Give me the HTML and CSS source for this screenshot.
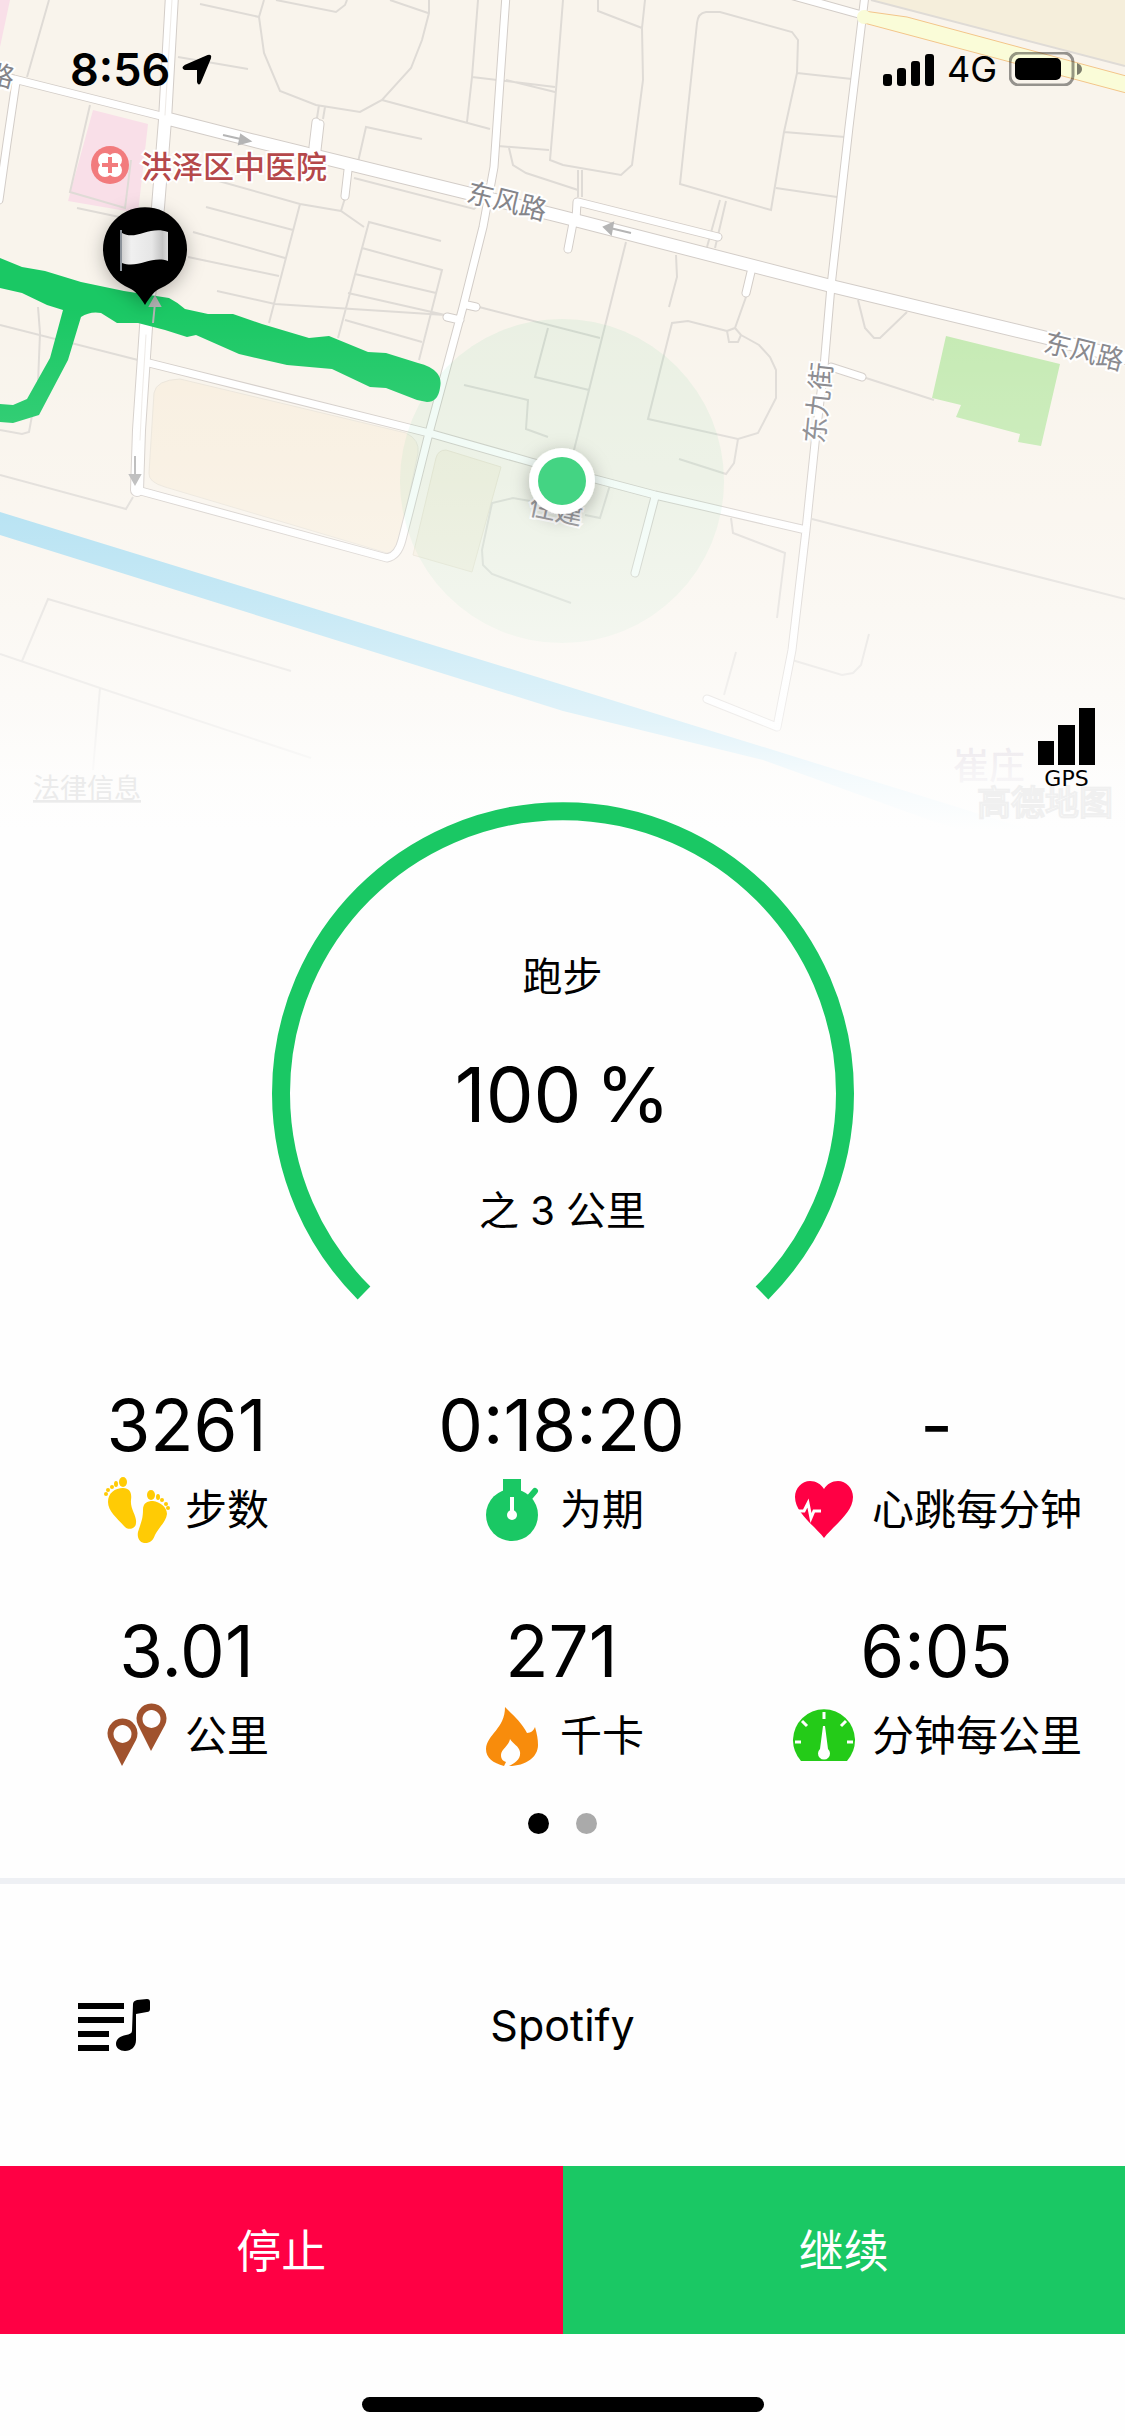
FILE: index.html
```html
<!DOCTYPE html>
<html lang="zh-CN">
<head>
    <meta charset="UTF-8">
    <meta name="viewport" content="width=device-width, initial-scale=1.0">
    <title>跑步</title>
    <link rel="stylesheet" href="styles.css">
</head>
<body>
    <header class="map">
        <svg class="map-canvas" viewBox="0 0 1125 830">
            <defs>
                <linearGradient id="fade" x1="0" y1="0" x2="0" y2="1">
                    <stop offset="0.37" stop-color="#fefefe" stop-opacity="0"/>
                    <stop offset="0.58" stop-color="#fefefe" stop-opacity="0.16"/>
                    <stop offset="0.72" stop-color="#fefefe" stop-opacity="0.36"/>
                    <stop offset="0.87" stop-color="#fefefe" stop-opacity="0.68"/>
                    <stop offset="0.93" stop-color="#fefefe" stop-opacity="0.88"/>
                    <stop offset="1" stop-color="#fefefe"/>
                </linearGradient>
                <linearGradient id="flag" x1="0" y1="0" x2="1" y2="0">
                    <stop offset="0" stop-color="#d0d0d0"/>
                    <stop offset="0.2" stop-color="#f0f0f0"/>
                    <stop offset="0.65" stop-color="#e6e6e6"/>
                    <stop offset="0.88" stop-color="#c4c4c4"/>
                    <stop offset="1" stop-color="#dcdcdc"/>
                </linearGradient>
                <filter id="shadow" x="-60%" y="-60%" width="220%" height="220%">
                    <feDropShadow dx="0" dy="4" stdDeviation="9" flood-color="#000" flood-opacity="0.28"/>
                </filter>
                <path id="wide-roads" d="M172 -5L165 120L158 207L146 327L139 430L137 490M165 118L251 140L467 193L563 217L831 286L1043 337L1130 359"/>
                <path id="roads" d="M-5 73L14 79L165 117M506 -5L494 167L483 227L463 307L429 433L413 497L402 540Q398 556 387 558L137 490M149 363L429 433L531 462L655 495L806 530M655 497L635 573M865 -5L849 127L831 286L824 367L815 443L806 530L792 650L777 727L707 699M790 -5L862 15M578 202L718 237M577 202L576 220M573 223L568 249M751 272L746 293M831 367L862 377M316 122L313 147M320 124L317 150M348 170L345 196M476 307L467 305M447 317L460 320M16 82L7 143L-1 200"/>
            </defs>
            <rect width="1125" height="830" fill="#f9f4ec"/>
            <!-- areas -->
            <path fill="#f5eedb" d="M871 0H1125V66Z"/>
            <path fill="#f9dfe8" d="M93 110L148 124L138 213L68 201ZM0 0H10L0 47Z"/>
            <path fill="#f8efe0" stroke="#ebe5da" d="M154 393Q156 380 180 379L406 433Q420 440 418 453L399 543Q396 552 387 553L165 487Q148 482 149 473Z"/>
            <path fill="#f5eedf" stroke="#eae3d2" d="M446 450L501 467L472 572L413 555L436 458Q438 450 446 450Z"/>
            <path fill="#c5eab3" d="M946 336L1060 364L1041 446L1018 442L1020 434L956 417L961 405L932 398Z"/>
            <path fill="#a6dcf0" d="M0 512L563 685L957 807L1030 830H960L921 817L763 760L563 711L0 535Z"/>
            <!-- small lanes -->
            <path class="lane" d="M49 0L27 77M200 4L259 17M264 0L259 17L264 53L280 91L316 105L360 112L382 100L411 68L422 40L429 13V0M276 0L336 12L345 5L347 0M390 0L428 13M178 57L248 69M382 100L490 129M478 0L472 77L467 122M472 77L555 87M506 80L555 92M498 146L549 150M563 0L556 90L550 160L563 165L621 175L632 165L643 80L642 28L645 0M598 0V11L642 28M509 148L513 165L526 173L578 190M422 139L366 127L358 162M354 178L474 209L481 203M319 105L317 118M325 107L323 119M90 105L70 192L125 208L131 160M77 208L124 218"/>
            <path class="lane" d="M215 180L300 204L341 211L364 227M345 198L341 211M300 204L269 323M206 207L293 230M193 232L285 258M188 257L279 276M217 291L275 304L445 315M441 241L369 222L338 338M362 248L442 270L419 360M355 274L436 293M348 293L445 315M345 320L422 342M479 307L600 338M0 325L138 360M38 307L40 333L38 383L29 432L22 434L0 430M548 328L535 377L589 390M464 385L528 400L526 429L548 437M626 242L574 450M676 255L677 277L669 307M746 297L735 328L741 335L738 342H729L727 331L735 328M727 331L688 321L672 323L648 419L738 439L758 433L776 398V370L770 357L759 345L741 335M738 439L734 463L726 474L679 459M858 300L865 328L874 338H880L907 312M866 378L934 400"/>
            <path class="lane" d="M697 23Q698 13 706 12L720 12L792 32L798 40L797 73L784 132L771 210L680 184ZM797 73L852 79M784 132L845 137M776 188L837 197M720 200L707 247M726 201L715 248M578 170V197M582 170V197M812 519L1125 599M731 518L733 533L785 553L777 618M792 660L842 675L853 673L861 665L869 634M736 652L724 695M571 603L492 574L483 565L482 550L492 503L513 498L530 501M610 485L600 518L585 515M0 475L126 509L133 497M291 671L48 599L22 661M0 654L100 688L311 758M100 688L93 770M871 0L1125 66"/>
            <!-- streets: casing first, then the white fill -->
            <g fill="none" stroke-linecap="round" stroke-linejoin="round">
                <use href="#roads" stroke="#d3cdc8" stroke-width="9"/>
                <use href="#wide-roads" stroke="#d3cdc8" stroke-width="14"/>
                <use href="#roads" stroke="#fff" stroke-width="7"/>
                <use href="#wide-roads" stroke="#fff" stroke-width="12"/>
                <path stroke="#eeeae6" d="M172 0L165 115M146 335L142 400L140 440"/>
            </g>
            <path fill="#fafcd8" stroke="#f3c58a" d="M864 11L907 17L1130 77V94L864 23Z"/>
            <circle cx="864" cy="17" r="7" fill="#fafcd8"/>
            <circle cx="562" cy="481" r="162" fill="#1ac864" fill-opacity="0.065"/>
            <!-- track -->
            <path fill="#1ac864" d="M0 258L22 267L45 271L81 282L124 291L169 298Q177 302 185 309L208 314H233L262 324L309 338L329 336L368 352L386 353L418 363Q431 366 437 373Q442 379 440 388Q438 402 427 402L417 400L386 388L370 387L332 369L287 365L239 354L196 335L187 337L165 330L138 323H117L101 313Q90 311 81 317L68 360L39 415L13 423L0 422V404L13 405L27 399L50 358L63 310L47 305L22 293L0 288Z"/>
            <g class="arrow">
                <path d="M223 135L245 140M241 135L250 141L239 144Z"/>
                <path d="M631 233L610 228M613 223L604 227L611 234Z"/>
                <path d="M153 323L155 303M150 306L155 297L160 306Z"/>
                <path d="M135 456V477M130 475H140L135 484Z"/>
            </g>
            <!-- place names -->
            <g class="street-name">
                <text transform="translate(507 201) rotate(14)" y="10">东风路</text>
                <text transform="translate(1084 351) rotate(14)" y="10">东风路</text>
                <text transform="translate(1 75) rotate(14)" y="10">路</text>
                <text transform="translate(818 403) rotate(-84)" y="10">东九街</text>
                <text transform="translate(556 510) rotate(12)" y="10">住建</text>
            </g>
            <text class="district" x="989" y="779">崔庄</text>
            <text class="hospital" x="141" y="178">洪泽区中医院</text>
            <circle cx="110" cy="165" r="19" fill="#f27b7d"/>
            <g fill="#fff">
                <circle cx="105" cy="160" r="7"/><circle cx="115" cy="160" r="7"/>
                <circle cx="105" cy="170" r="7"/><circle cx="115" cy="170" r="7"/>
            </g>
            <path stroke="#f27b7d" stroke-width="4" d="M110 157V173M102 165H118"/>
            <!-- start pin -->
            <path filter="url(#shadow)" d="M145 305C140 297 136 291 129 288A42 42 0 1 1 161 288C154 291 150 297 145 305Z"/>
            <path fill="url(#flag)" d="M122 233C136 241 150 225 168 232V261C152 255 138 269 122 263Z"/>
            <path stroke="#8b929a" stroke-width="2" d="M121 230V271"/>
            <rect width="1125" height="830" fill="url(#fade)"/>
            <a href="#legal"><text class="legal" x="33" y="798">法律信息</text></a>
            <text class="brand" x="977" y="815">高德地图</text>
            <circle cx="562" cy="481" r="33" fill="#fff" filter="url(#shadow)"/>
            <circle cx="562" cy="481" r="24" fill="#44d483"/>
        </svg>

        <div class="status-bar">
            <span class="clock">8:56
                <svg width="30" height="31" viewBox="0 0 30 31"><path stroke="#000" stroke-width="2" stroke-linejoin="round" d="M26 2Q29 1 28 4L18 28Q17 31 16 28V15H3Q0 14 3 12Z"/></svg>
            </span>
            <span class="network">
                <svg width="52" height="33" viewBox="0 0 52 33"><rect y="21" width="9" height="12" rx="3"/><rect x="14" y="15" width="9" height="18" rx="3"/><rect x="28" y="8" width="9" height="25" rx="3"/><rect x="42" y="1" width="9" height="32" rx="3"/></svg>
                4G
                <svg width="73" height="34" viewBox="0 0 73 34"><rect x="1" y="1" width="63" height="32" rx="9" fill="none" stroke="#000" stroke-opacity="0.4" stroke-width="3"/><rect x="6" y="6" width="46" height="22" rx="5"/><path fill="#000" fill-opacity="0.5" d="M68 11Q73 13 73 17T68 23Z"/></svg>
            </span>
        </div>
        <div class="gps">
            <svg width="57" height="57" viewBox="0 0 57 57"><path d="M0 33H16V57H0ZM20 17H37V57H20ZM41 0H57V57H41Z"/></svg>
            <span>GPS</span>
        </div>
    </header>

    <main>
        <section class="goal">
            <svg class="goal-ring" viewBox="0 0 584 498"><path fill="none" stroke="#1ac864" stroke-width="18" d="M93 491A282 282 0 1 1 491 491"/></svg>
            <div class="goal-text">
                <h1>跑步</h1>
                <strong><span>100</span><span>%</span></strong>
                <p>之 3 公里</p>
            </div>
        </section>

        <section class="stats">
            <div class="stat">
                <div class="value">3261</div>
                <div class="label">
                    <svg class="icon" viewBox="0 0 66 66" fill="#ffcb05">
                        <ellipse cx="19" cy="5" rx="4" ry="5"/><ellipse cx="12" cy="7" rx="2" ry="3"/><circle cx="8" cy="10" r="2"/><circle cx="4" cy="13" r="2"/><circle cx="2" cy="17" r="2"/>
                        <path d="M4 25C4 16 11 11 19 11C26 11 28 16 27 23C26 32 33 39 32 46C32 52 24 54 20 49C13 41 4 34 4 25Z"/>
                        <ellipse cx="47" cy="18" rx="4" ry="5"/><ellipse cx="54" cy="20" rx="2" ry="3"/><circle cx="58" cy="23" r="2"/><circle cx="62" cy="27" r="2"/><circle cx="64" cy="31" r="2"/>
                        <path d="M39 33C39 26 43 24 49 24C56 25 63 30 63 37C62 45 55 50 51 58C48 66 44 66 40 66C35 65 33 60 34 55C36 48 39 43 39 33Z"/>
                    </svg>
                    步数
                </div>
            </div>
            <div class="stat">
                <div class="value">0:18:20</div>
                <div class="label">
                    <svg class="icon" viewBox="0 0 66 66">
                        <g fill="#1ac864"><circle cx="33" cy="38" r="26"/><path d="M24 2H42V16H24Z"/></g>
                        <path stroke="#1ac864" stroke-width="6" stroke-linecap="round" d="M50 21L56 14"/>
                        <path stroke="#fff" stroke-width="4" d="M33 20V38"/><circle cx="33" cy="38" r="5" fill="#fff"/>
                    </svg>
                    为期
                </div>
            </div>
            <div class="stat">
                <div class="value">-</div>
                <div class="label">
                    <svg class="icon" viewBox="0 0 66 66">
                        <path fill="#ff0044" d="M33 61C24 49 4 36 4 20C4 11 11 4 19 4C25 4 30 7 33 12C36 7 41 4 47 4C55 4 62 11 62 20C62 36 42 49 33 61Z"/>
                        <path fill="none" stroke="#fff" stroke-width="3" d="M7 34H13L17 26L20 41L23 34H30"/>
                    </svg>
                    心跳每分钟
                </div>
            </div>
            <div class="stat">
                <div class="value">3.01</div>
                <div class="label">
                    <svg class="icon" viewBox="0 0 66 66" fill="#a0522d" fill-rule="evenodd">
                        <path d="M18 63L5 37A15 15 0 1 1 32 37ZM18 22A9 9 0 1 0 19 22Z"/>
                        <path d="M47 48L34 22A15 15 0 1 1 61 22ZM47 7A9 9 0 1 0 48 7Z"/>
                    </svg>
                    公里
                </div>
            </div>
            <div class="stat">
                <div class="value">271</div>
                <div class="label">
                    <svg class="icon" viewBox="0 0 66 66">
                        <path fill="#f88c0c" d="M26 4C34 12 43 20 48 30C52 30 55 27 56 24C58 31 59 36 59 42C59 54 47 63 30 63C36 60 42 56 41 49C40 43 34 41 31 36C30 43 22 46 22 52C22 56 24 58 27 59L25 63C14 60 7 55 7 46C8 31 26 26 26 4Z"/>
                    </svg>
                    千卡
                </div>
            </div>
            <div class="stat">
                <div class="value">6:05</div>
                <div class="label">
                    <svg class="icon" viewBox="0 0 66 66">
                        <path fill="#24cb18" d="M10 58A31 31 0 1 1 56 58Z"/>
                        <path stroke="#fff" stroke-width="3" d="M33 9V16M11 18L16 23M55 18L50 23M4 39H10M62 39H56"/>
                        <path fill="#fff" d="M32 23H34L37 46A6 6 0 1 1 29 46Z"/>
                    </svg>
                    分钟每公里
                </div>
            </div>
        </section>

        <div class="pager">
            <span class="dot active"></span>
            <span class="dot"></span>
        </div>

        <section class="music">
            <svg width="72" height="52" viewBox="0 0 72 52"><path d="M0 4H46V10H0ZM0 18H46V24H0ZM0 32H31V38H0ZM0 46H31V52H0Z"/><path d="M55 5Q55 2 59 1L69 0Q72 0 72 3V10Q72 13 69 13L58 15V41C58 48 53 52 47 52C42 52 38 49 38 45C38 40 42 37 48 36Q54 35 54 32Z"/></svg>
            <span class="music-name">Spotify</span>
        </section>
    </main>

    <footer>
        <div class="actions">
            <button type="button" class="stop">停止</button>
            <button type="button" class="resume">继续</button>
        </div>
        <div class="home-indicator"></div>
    </footer>
</body>
</html>
```
FILE: styles.css
```css
* {
    box-sizing: border-box;
}
body {
    margin: 0;
    font-family: Inter, 'Noto Sans CJK SC', sans-serif;
    background-color: #fefefe;
    color: #000;
}
svg {
    display: block;
    flex-shrink: 0;
}

/* map */
.map {
    position: relative;
}
.map-canvas {
    width: 100%;
    height: auto;
}
.map-canvas text {
    font-family: 'Noto Sans CJK SC', sans-serif;
}
.lane {
    fill: none;
    stroke: #dfdbd6;
    stroke-width: 2;
}
.arrow {
    fill: #b5b5b5;
    stroke: #b5b5b5;
    stroke-width: 2;
}
.street-name {
    font-size: 27px;
    fill: #85858a;
    text-anchor: middle;
    paint-order: stroke;
    stroke: #fff;
    stroke-width: 4px;
}
.hospital {
    font-size: 31px;
    font-weight: 500;
    fill: #b5484a;
    paint-order: stroke;
    stroke: #fff;
    stroke-width: 4px;
}
.district {
    font-size: 36px;
    font-weight: 500;
    fill: #b8a8b8;
    text-anchor: middle;
}
.legal {
    font-size: 27px;
    fill: #ebebeb;
    text-decoration: underline;
}
.brand {
    font-size: 34px;
    fill: #fefefe;
    stroke: #f0f0f0;
    stroke-width: 2px;
}
.status-bar {
    position: absolute;
    top: 40px;
    left: 0;
    right: 0;
    display: flex;
    justify-content: space-between;
    align-items: center;
    height: 58px;
    padding: 0 43px 0 70px;
}
.clock,
.network {
    display: flex;
    align-items: center;
    gap: 12px;
}
.clock {
    font-size: 45px;
    font-weight: 600;
}
.network {
    font-size: 36px;
}
.gps {
    position: absolute;
    right: 30px;
    bottom: 38px;
    display: flex;
    flex-direction: column;
    align-items: center;
    font-family: 'DejaVu Sans', sans-serif;
    font-size: 22px;
    line-height: 27px;
}

/* goal ring */
.goal {
    position: relative;
    width: 584px;
    max-width: 100%;
    margin: -28px auto 0;
}
.goal-text {
    position: absolute;
    inset: 0;
    display: flex;
    flex-direction: column;
    align-items: center;
    padding-top: 145px;
    gap: 37px;
}
.goal h1,
.goal p {
    margin: 0;
    font-size: 40px;
    font-weight: 400;
    line-height: 60px;
}
.goal strong {
    display: flex;
    gap: 14px;
    font-size: 76px;
    font-weight: 400;
    line-height: 100px;
}

/* stats */
.stats {
    display: grid;
    grid-template-columns: repeat(3, 1fr);
    row-gap: 68px;
    margin-top: 85px;
    text-align: center;
}
.value {
    padding-right: 2px;
    font-size: 71px;
    line-height: 80px;
    margin-bottom: 12px;
}
.label {
    display: flex;
    justify-content: center;
    align-items: center;
    gap: 15px;
    padding-right: 2px;
    font-size: 42px;
    line-height: 66px;
    white-space: nowrap;
}
.icon {
    width: 66px;
    height: 66px;
}
.pager {
    display: flex;
    justify-content: center;
    gap: 27px;
    margin: 44px 0;
}
.dot {
    width: 21px;
    height: 21px;
    border-radius: 50%;
    background-color: #aaa;
}
.dot.active {
    background-color: #000;
}

/* music */
.music {
    display: grid;
    grid-template-columns: 1fr auto 1fr;
    align-items: center;
    padding: 110px 78px;
    border-top: 6px solid #eef0f4;
}
.music-name {
    font-size: 43px;
    line-height: 62px;
}

/* actions */
.actions {
    display: flex;
}
.actions button {
    flex: 1;
    height: 168px;
    padding: 0 0 4px;
    border: none;
    color: #fff;
    font-family: inherit;
    font-size: 45px;
    cursor: pointer;
}
.stop {
    background-color: #ff0044;
}
.resume {
    background-color: #1ac864;
}
.home-indicator {
    width: 402px;
    height: 15px;
    margin: 63px auto 24px;
    border-radius: 8px;
    background-color: #000;
}
```
